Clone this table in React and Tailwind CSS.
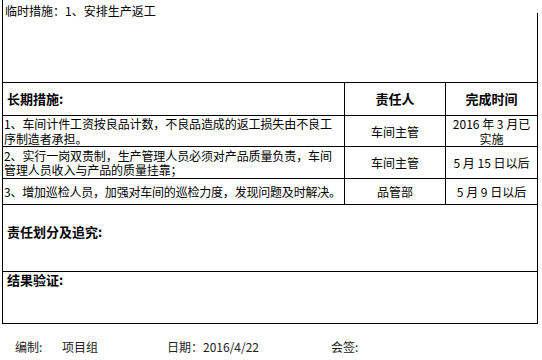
export default function App() {
  const f = { fontFamily: '"Noto Sans CJK SC", "Noto Sans", sans-serif' };
  return (
    <div className="w-[542px] h-[360px] bg-white text-black overflow-hidden" style={f}>
      <div className="ml-[2px] w-[536px] border-l border-black">
        {/* top */}
        <div className="h-[83px] border-b border-black flex">
          <div className="flex-1 pl-[2px] pt-[3px] text-[12px] leading-[16px]">临时措施：1、安排生产返工</div>
          <div className="w-px mt-[13px] bg-black"></div>
        </div>
        <div className="border-r border-black">
          {/* header */}
          <div className="grid grid-cols-[342px_101px_1fr] h-[33px] border-b border-black">
            <div className="border-r border-black flex items-center pl-[4px] text-[13px] font-bold">长期措施:</div>
            <div className="border-r border-black flex items-center justify-center text-[13px] font-bold">责任人</div>
            <div className="flex items-center justify-center text-[13px] font-bold">完成时间</div>
          </div>
          {/* row 1 */}
          <div className="grid grid-cols-[342px_101px_1fr] h-[31px] border-b border-black text-[12px] leading-[15px]">
            <div className="border-r border-black flex flex-col justify-center pl-[1px] whitespace-nowrap tracking-[-0.1px]">
              <span>1、车间计件工资按良品计数，不良品造成的返工损失由不良工</span>
              <span>序制造者承担。</span>
            </div>
            <div className="border-r border-black flex items-center justify-center">车间主管</div>
            <div className="flex flex-col items-center justify-center">
              <span>2016 年 3 月已</span>
              <span>实施</span>
            </div>
          </div>
          {/* row 2 */}
          <div className="grid grid-cols-[342px_101px_1fr] h-[32px] border-b border-black text-[12px] leading-[14px]">
            <div className="border-r border-black flex flex-col justify-center pl-[1px] whitespace-nowrap tracking-[-0.1px]">
              <span>2、实行一岗双责制，生产管理人员必须对产品质量负责，车间</span>
              <span>管理人员收入与产品的质量挂靠；</span>
            </div>
            <div className="border-r border-black flex items-center justify-center">车间主管</div>
            <div className="flex items-center justify-center">5 月 15 日以后</div>
          </div>
          {/* row 3 */}
          <div className="grid grid-cols-[342px_101px_1fr] h-[26px] border-b border-black text-[12px] leading-[15px]">
            <div className="border-r border-black flex items-center pl-[1px] whitespace-nowrap tracking-[-0.2px]">3、增加巡检人员，加强对车间的巡检力度，发现问题及时解决。</div>
            <div className="border-r border-black flex items-center justify-center">品管部</div>
            <div className="flex items-center justify-center">5 月 9 日以后</div>
          </div>
          {/* 责任划分 */}
          <div className="h-[67px] border-b border-black pl-[4px] pt-[19px] text-[13px] leading-[15px] font-bold">责任划分及追究:</div>
          {/* 结果验证 */}
          <div className="h-[52px] border-b border-black pl-[4px] pt-0 text-[13px] leading-[15px] font-bold">结果验证:</div>
        </div>
      </div>
      {/* footer */}
      <div className="flex items-center h-[16px] mt-[15px] text-[12px] leading-[16px] text-[#222]">
        <span className="ml-[15px] w-[47px]">编制:</span>
        <span className="w-[105px]">项目组</span>
        <span className="w-[164px]">日期：2016/4/22</span>
        <span>会签:</span>
      </div>
    </div>
  );
}
